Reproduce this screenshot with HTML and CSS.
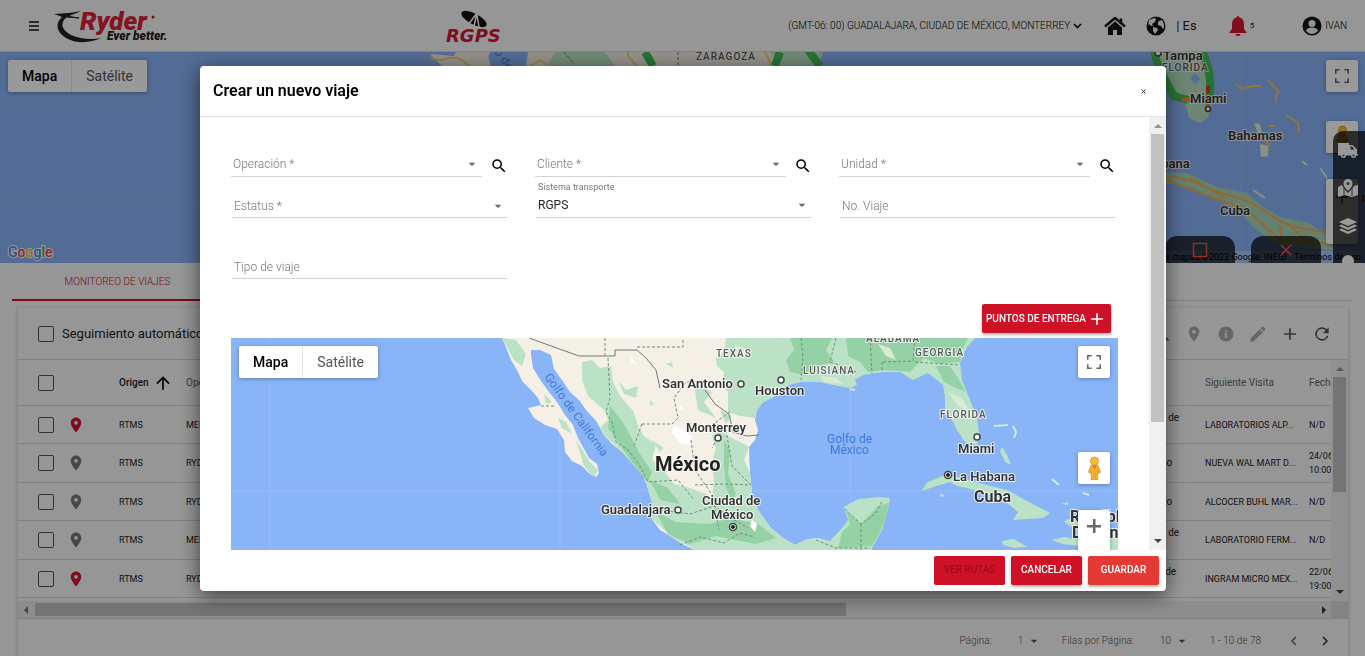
FILE: index.html
```html
<!DOCTYPE html>
<html lang="es">
<head>
<meta charset="utf-8">
<title>RGPS - Crear un nuevo viaje</title>
<link rel="stylesheet" href="styles.css">
</head>
<body>
<svg class="defs" aria-hidden="true">
  <symbol id="i-caret" viewBox="0 0 24 24"><path d="M7 10l5 5 5-5z"/></symbol>
  <symbol id="i-search" viewBox="0 0 24 24"><path d="M15.5 14h-.79l-.28-.27A6.471 6.471 0 0 0 16 9.500 6.500 6.500 0 1 0 9.500 16c1.610 0 3.090-.59 4.230-1.570l.27.28v.79l5 4.990L20.490 19l-4.990-5zm-6 0C7.010 14 5 11.990 5 9.500S7.010 5 9.500 5 14 7.010 14 9.500 11.990 14 9.500 14z"/></symbol>
  <symbol id="i-pin" viewBox="0 0 24 24"><path d="M12 2C8.130 2 5 5.130 5 9c0 5.250 7 13 7 13s7-7.750 7-13c0-3.870-3.130-7-7-7zm0 9.500a2.500 2.500 0 1 1 0-5 2.500 2.500 0 0 1 0 5z"/></symbol>
  <symbol id="i-plus" viewBox="0 0 24 24"><path d="M19 13h-6v6h-2v-6H5v-2h6V5h2v6h6v2z"/></symbol>
  <symbol id="i-full" viewBox="0 0 18 18"><path d="M0 0v6h2V2h4V0H0zm16 0h-4v2h4v4h2V0h-2zm0 16h-4v2h6v-6h-2v4zM2 12H0v6h6v-2H2v-4z"/></symbol>
  <symbol id="i-man" viewBox="0 0 14 26"><g stroke="#c9892b" stroke-width=".8"><path fill="#fbb52a" d="M3 10h8l2.400 7-1.800 1-1.100-2.500V25H7.500v-7h-1v7H3.500v-9.500L2.400 18 .6 17z"/><circle cx="7" cy="5" r="4.300" fill="#fbbc2f"/></g><path fill="#e8811c" d="M4 9.500h6L7 14z"/></symbol>
</svg>

<div class="app">
  <header class="topbar">
    <button class="icon-btn burger" aria-label="Menú"><svg width="10" height="10" viewBox="0 0 10 10"><path d="M0 1h10M0 5h10M0 9h10" stroke="#111" stroke-width="1.500"/></svg></button>
    <svg class="ryder" width="116" height="36" viewBox="0 0 116 36" role="img" aria-label="Ryder Ever better.">
      <path d="M0 6C10 5 18 5 27 3 21 6 16 7 13 9 5 15 8 22 17 27c9 4 20 5 30 3-10 5-25 6-35 0C2 24 1 15 8 9 6 8 3 7 0 6z" fill="#222"/>
      <path d="M5 7l20 3-12-1z" stroke="#222" fill="#222"/>
      <text x="26" y="22" class="ryder-name">Ryder</text><circle cx="99" cy="9" r="1.500" fill="#ce1126"/>
      <text x="53" y="32" class="ryder-tag">Ever better.</text>
    </svg>
    <svg class="rgps" width="62" height="36" viewBox="0 0 62 36" role="img" aria-label="RGPS">
      <ellipse cx="29" cy="13" rx="14" ry="5.500" transform="rotate(28 29 13)" fill="#111"/>
      <path d="M23 19L32 7l-3 13M32 9l2 12" stroke="#fff" stroke-width="1.500" fill="none"/>
      <text x="1" y="36" class="rgps-name">RGPS</text>
    </svg>
    <nav class="top-actions">
      <button class="text-btn tz">(GMT-06: 00) GUADALAJARA, CIUDAD DE MÉXICO, MONTERREY <svg width="9" height="6" viewBox="0 0 9 6"><path d="M1 1l3.500 3.500L8 1" fill="none" stroke="#111" stroke-width="1.700"/></svg></button>
      <button class="icon-btn home" aria-label="Inicio"><svg width="22" height="18" viewBox="0 0 22 18"><path d="M1 9.500L11 1l10 8.500M17 1.500v4" fill="none" stroke="#111" stroke-width="2.500"/><path d="M4 10.500L11 4.500l7 6V18h-5v-5H9v5H4z" fill="#111"/></svg></button>
      <button class="icon-btn globe" aria-label="Idioma"><svg width="20" height="20" viewBox="0 0 20 20"><circle cx="10" cy="10" r="9.500" fill="#111"/><path d="M3 4l5-2 2 1-1 3-3 2 1 2H5L3 8l-1 2zM7 11l4 1 1 2-3 4-2-3zM13 5l3-1 2 4v4l-1 1-2-3-3-1v-3z" fill="#f2f2f2"/></svg></button>
      <span class="lang">| Es</span>
      <button class="icon-btn bell" aria-label="Notificaciones"><svg width="18" height="20" viewBox="0 0 18 20"><path d="M9 0c1 0 1.300.8 1.300 1.600C13.500 2.300 15 5 15 8v4c0 1.500 1 2.500 2.500 4v1H.5v-1C2 14.500 3 13.500 3 12V8c0-3 1.500-5.700 4.700-6.400C7.700.8 8 0 9 0zM6.500 18h5a2.500 2 0 0 1-5 0z" fill="#d9142c"/></svg></button>
      <span class="count">5</span>
      <button class="text-btn user"><svg width="20" height="20" viewBox="0 0 20 20"><circle cx="10" cy="10" r="9.500" fill="#111"/><circle cx="10" cy="7.500" r="3.500" fill="#f5f5f5"/><path d="M3.800 14.500c1-2 3.500-3 6.200-3s5.200 1 6.200 3c-3 4.500-9.500 4.500-12.400 0z" fill="#f5f5f5"/></svg>IVAN</button>
    </nav>
  </header>

  <section class="map map-back" aria-label="Mapa de monitoreo">
    <svg class="map-art" viewBox="0 52 1365 211" preserveAspectRatio="xMaxYMin slice">
      <path fill="#8ab4f8" d="M0 52h1365v211H0z"/>
      <path d="M485 52v20M1241 52v211M0 202h1365" stroke="#98bcf6" fill="none"/>
      <path fill="#f5f0e5" d="M430 54l24 2 2-4h34c-4 6 2 10 0 16h-46z"/>
      <path fill="#f5f0e5" d="M528 52h295l-5 14H526z"/>
      <path fill="#bbe2c6" d="M555 52h50l10 14h-68zM770 52h53l-5 14h-38z"/>
      <path d="M430 57c12 8 18-3 30 2l10 7M530 66l10-6 8 6M628 52c-2 6 6 8 8 14M765 52l7 14" stroke="#f7cf73" stroke-width="2" fill="none"/>
      <path d="M645 52l8 14M780 52l-5 14M808 50l12 16" stroke="#3fbf55" stroke-width="8" fill="none"/>
      <path d="M564 52l10 12M678 52v14" stroke="#777" stroke-dasharray="3 2" fill="none"/>
      <text x="696" y="60" class="m-state">ZARAGOZA</text>
      <text x="494" y="52" class="m-sea" transform="rotate(55 494 52)">o de</text>
      <path fill="#b5dfc0" d="M1152 52h56l5 28-1 24-4 14-8 5-11-5-4-15-12-3-10-30z"/>
      <path d="M1154 52c4 16 14 34 20 44l14 4M1203 52c6 16 9 30 6 50" stroke="#3fbf55" stroke-width="8" fill="none"/>
      <path d="M1182 100l10 0M1205 96l4 12" stroke="#f08a3c" stroke-width="4"/><path d="M1208 86v7" stroke="#e0332b" stroke-width="4"/>
      <path fill="#8ab4f8" d="M1195 73l5 6-5 5-5-6z"/>
      <path d="M1236 84l6 5 10-3h9M1268 80l10 11-3 11M1286 115l12 8 1 10M1269 126h6M1255 124l6 12 8 8-3 12" stroke="#efc468" stroke-width="2" fill="none"/>
      <path fill="#e9eedc" d="M1254 123l6 1 2 11-3 1zM1260 144l8 2v10l-7 1z"/>
      <path d="M1253 190l12 8M1302 161l5 4M1320 168l7 10" stroke="#e3eee4" stroke-width="2"/>
      <path fill="#a9d8b8" d="M1160 173L1187 173L1217 187L1247 193L1263 207L1280 217L1310 223L1325 235L1334 250L1303 248L1277 245L1253 227L1240 212L1217 200L1190 187L1160 182z"/>
      <path d="M1160 175C1190 176 1210 192 1232 196C1260 202 1270 220 1292 226L1334 234M1160 178C1190 188 1205 196 1225 202C1250 206 1262 226 1280 240L1334 244M1190 178L1225 198M1280 226l2 18M1290 226l22 20" stroke="#efae55" stroke-width="2" fill="none"/>
      <text x="1163" y="60" class="m-city">Tampa</text><circle cx="1158" cy="53" r="3" fill="#fff" stroke="#444" stroke-width="1.500"/>
      <text x="1162" y="71" class="m-state">FLORIDA</text>
      <text x="1190" y="103" class="m-city">Miami</text><circle cx="1208" cy="109" r="2.500" fill="#fff" stroke="#444" stroke-width="1.500"/>
      <text x="1228" y="140" class="m-city">Bahamas</text>
      <text x="1145" y="168" class="m-city">Habana</text>
      <text x="1220" y="215" class="m-city">Cuba</text>
      <text x="1361" y="203" class="m-city">It</text>
      <text x="8" y="257" class="google"><tspan fill="#4285f4">G</tspan><tspan fill="#ea4335">o</tspan><tspan fill="#fbbc05">o</tspan><tspan fill="#4285f4">g</tspan><tspan fill="#34a853">l</tspan><tspan fill="#ea4335">e</tspan></text>
    </svg>
    <div class="map-type"><button class="on">Mapa</button><button>Satélite</button></div>
    <button class="map-ctl ctl-full" aria-label="Pantalla completa"><svg width="14" height="14"><use href="#i-full"/></svg></button>
    <button class="map-ctl ctl-man" aria-label="Street View"><svg width="13" height="25"><use href="#i-man"/></svg></button>
    <button class="map-ctl ctl-zoom" aria-label="Acercar"><svg width="22" height="22"><use href="#i-plus"/></svg></button>
    <p class="credits"><span>Datos de mapas ©2023 Google, INEGI</span><a href="#">Términos de uso</a></p>
    <div class="map-tabs">
      <button aria-label="Recuadro"><svg width="16" height="16" viewBox="0 0 16 16"><path d="M1.500 1.500h13v13h-13z" fill="none" stroke="#ff4a42" stroke-width="1.500"/></svg></button>
      <button aria-label="Cerrar mapa"><svg width="12" height="12" viewBox="0 0 12 12"><path d="M1 1l10 10M11 1L1 11" stroke="#ff4a42" stroke-width="1.500"/></svg></button>
    </div>
    <div class="side-tools">
      <button aria-label="Unidades"><svg width="20" height="16" viewBox="0 0 20 16"><path fill="#fff" d="M0 1h11v2h3.500L19 7.500V12h1v1.500h-2a2.500 2.500 0 0 1-5 0H8a2.500 2.500 0 0 1-5 0H0z"/><circle cx="5.500" cy="13.500" r="1" fill="#444"/><circle cx="15.500" cy="13.500" r="1" fill="#444"/><path d="M12.500 4.500h1.500l2.500 3h-4z" fill="#444"/></svg></button>
      <button aria-label="Geocercas"><svg width="20" height="18" viewBox="0 0 20 18"><path fill="#fff" d="M0 8l4-2c1 3 4 6 6 8 2-2 5-5 6-7l4-1v10l-6 2-7-2-7 2z"/><path fill="#fff" fill-rule="evenodd" d="M10 0a4.500 4.500 0 0 1 4.500 4.500C14.500 8 10 12 10 12S5.500 8 5.500 4.500A4.500 4.500 0 0 1 10 0zm0 3a1.500 1.500 0 1 0 0 3 1.500 1.500 0 0 0 0-3z"/><path d="M6 9v8M14 9v8" stroke="#555"/></svg></button>
      <button aria-label="Capas"><svg width="18" height="18" viewBox="0 0 18 18"><path fill="#fff" d="M9 1l9 4-9 4-9-4zM2.500 7.500L9 10.500l6.500-3L18 9l-9 4-9-4zM2.500 11.500L9 14.500l6.500-3L18 13l-9 4-9-4z"/></svg></button>
      <button aria-label="Más"><svg width="14" height="20"><circle cx="7" cy="7" r="6" fill="#fff"/></svg></button>
    </div>
  </section>

  <div class="tabs"><button class="tab">MONITOREO DE VIAJES</button></div>

  <main class="card">
    <div class="card-bar">
      <label class="follow"><input type="checkbox" class="check">Seguimiento automático</label>
      <div class="card-tools">
        <button class="icon-btn" aria-label="Buscar"><svg width="20" height="20"><use href="#i-search"/></svg></button>
        <button class="icon-btn dis" aria-label="Ubicar"><svg width="18" height="18"><use href="#i-pin"/></svg></button>
        <button class="icon-btn dis" aria-label="Información"><svg width="18" height="18" viewBox="0 0 24 24"><path d="M12 2a10 10 0 1 0 0 20 10 10 0 0 0 0-20zm2 15h-4v-1.500h1V12h-1v-1.500h3v5h1zm-1-8h-2V7h2z"/></svg></button>
        <button class="icon-btn dis" aria-label="Editar"><svg width="20" height="20" viewBox="0 0 24 24"><path d="M3 17.250V21h3.750L17.810 9.940l-3.750-3.750L3 17.250zM20.710 7.040a1 1 0 0 0 0-1.410l-2.340-2.340a1 1 0 0 0-1.410 0l-1.830 1.830 3.750 3.750 1.830-1.830z"/></svg></button>
        <button class="icon-btn" aria-label="Agregar"><svg width="20" height="20"><use href="#i-plus"/></svg></button>
        <button class="icon-btn" aria-label="Actualizar"><svg width="20" height="20" viewBox="0 0 24 24"><path d="M17.650 6.350A8 8 0 1 0 19.730 14h-2.080A6 6 0 1 1 12 6c1.660 0 3.140.69 4.220 1.780L13 11h7V4l-2.350 2.350z"/></svg></button>
      </div>
    </div>
    <div class="grid-wrap">
      <table class="trips">
        <colgroup><col class="c-check"><col class="c-pin"><col class="c-org"><col><col class="c-state"><col class="c-next"><col class="c-date"></colgroup>
        <thead><tr><th><input type="checkbox" class="check" aria-label="Seleccionar todo"></th><th></th><th class="sorted">Origen <svg width="20" height="20" viewBox="0 0 24 24"><path d="M4 12l1.410 1.410L11 7.830V20h2V7.830l5.580 5.590L20 12l-8-8-8 8z"/></svg></th><th>Operación</th><th>Estado</th><th>Siguiente Visita</th><th>Fecha</th></tr></thead>
        <tbody>
          <tr><td><input type="checkbox" class="check" aria-label="Viaje 1"></td><td><svg class="pin red" width="18" height="18"><use href="#i-pin"/></svg></td><td>RTMS</td><td>MERCK</td><td class="state">Salida fuera de ruta</td><td>LABORATORIOS ALP...</td><td>N/D</td></tr>
          <tr><td><input type="checkbox" class="check" aria-label="Viaje 2"></td><td><svg class="pin" width="18" height="18"><use href="#i-pin"/></svg></td><td>RTMS</td><td>RYDER</td><td class="state">Viaje iniciado</td><td>NUEVA WAL MART D...</td><td>24/06/2023 10:00</td></tr>
          <tr><td><input type="checkbox" class="check" aria-label="Viaje 3"></td><td><svg class="pin" width="18" height="18"><use href="#i-pin"/></svg></td><td>RTMS</td><td>RYDER</td><td class="state">Viaje iniciado</td><td>ALCOCER BUHL MAR...</td><td>N/D</td></tr>
          <tr><td><input type="checkbox" class="check" aria-label="Viaje 4"></td><td><svg class="pin" width="18" height="18"><use href="#i-pin"/></svg></td><td>RTMS</td><td>MERCK</td><td class="state">Salida fuera de ruta</td><td>LABORATORIO FERM...</td><td>N/D</td></tr>
          <tr><td><input type="checkbox" class="check" aria-label="Viaje 5"></td><td><svg class="pin red" width="18" height="18"><use href="#i-pin"/></svg></td><td>RTMS</td><td>RYDER</td><td class="state">En proceso de entrega</td><td>INGRAM MICRO MEX...</td><td>22/06/2023 19:00</td></tr>
        </tbody>
      </table>
      <div class="vscroll" aria-hidden="true"><i class="up"></i><b class="grid-thumb"></b><i class="down"></i></div>
    </div>
    <div class="hscroll" aria-hidden="true"><i class="left"></i><b></b><i class="right"></i><span></span></div>
    <footer class="pager">
      <label for="page">Página:</label>
      <span class="mini"><select id="page"><option>1</option></select><svg width="16" height="16"><use href="#i-caret"/></svg></span>
      <label for="rows">Filas por Página:</label>
      <span class="mini"><select id="rows"><option>10</option></select><svg width="16" height="16"><use href="#i-caret"/></svg></span>
      <span class="range">1 - 10 de 78</span>
      <button class="icon-btn" aria-label="Anterior"><svg width="7" height="10" viewBox="0 0 7 10"><path d="M6 1L2 5l4 4" fill="none" stroke="#666" stroke-width="1.500"/></svg></button>
      <button class="icon-btn" aria-label="Siguiente"><svg width="7" height="10" viewBox="0 0 7 10"><path d="M1 1l4 4-4 4" fill="none" stroke="#333" stroke-width="1.500"/></svg></button>
    </footer>
  </main>
</div>

<div class="backdrop">
  <section class="dialog" role="dialog" aria-labelledby="dlg-title">
    <header class="dlg-head"><h1 id="dlg-title">Crear un nuevo viaje</h1><button class="icon-btn" aria-label="Cerrar"><svg width="5" height="5" viewBox="0 0 5 5"><path d="M.5.5l4 4M4.500.5l-4 4" stroke="#333"/></svg></button></header>
    <div class="dlg-body">
      <div class="dlg-content">
        <form class="form">
          <div class="pair"><div class="field"><label for="op">Operación *</label><select id="op"><option></option></select><svg class="caret"><use href="#i-caret"/></svg></div><button type="button" class="icon-btn" aria-label="Buscar operación"><svg width="20" height="20"><use href="#i-search"/></svg></button></div>
          <div class="pair"><div class="field"><label for="cl">Cliente *</label><select id="cl"><option></option></select><svg class="caret"><use href="#i-caret"/></svg></div><button type="button" class="icon-btn" aria-label="Buscar cliente"><svg width="20" height="20"><use href="#i-search"/></svg></button></div>
          <div class="pair"><div class="field"><label for="un">Unidad *</label><select id="un"><option></option></select><svg class="caret"><use href="#i-caret"/></svg></div><button type="button" class="icon-btn" aria-label="Buscar unidad"><svg width="20" height="20"><use href="#i-search"/></svg></button></div>
          <div class="field inset"><label for="es">Estatus *</label><select id="es"><option></option></select><svg class="caret"><use href="#i-caret"/></svg></div>
          <div class="field inset filled"><label for="si">Sistema transporte</label><select id="si"><option>RGPS</option></select><svg class="caret"><use href="#i-caret"/></svg></div>
          <div class="field inset"><label for="nv">No. Viaje</label><input id="nv" type="text"></div>
          <div class="field inset"><label for="tv">Tipo de viaje</label><input id="tv" type="text"></div>
        </form>
        <div class="points"><button class="btn">PUNTOS DE ENTREGA <svg width="20" height="20"><use href="#i-plus"/></svg></button></div>
        <div class="map map-front">
          <svg class="map-art" viewBox="231 338 887 300" preserveAspectRatio="xMidYMin slice">
            <path fill="#8ab4f8" d="M231 338h887v300H231z"/>
            <path d="M270 338v300M560 338v300M850 338v300M231 491h887" stroke="#98bdf9" fill="none"/>
            <path fill="#f5f0e5" d="M502 338L505 345L511 360L518 372L522 381L530 389L538 398L541 405L528 408L534 418L545 425L557 429L564 440L565 452L572 461L582 466L590 474L596 477L599 473L597 464L589 458L584 449L578 438L573 425L565 415L557 402L549 392L541 381L533 368L531 355L531 350L540 350L551 355L554 369L562 380L570 392L580 401L586 410L597 422L603 434L612 444L622 452L632 463L644 477L648 489L652 502L651 518L660 530L672 537L684 545L700 552L700 600L820 600L820 538L808 539L795 545L783 538L770 527L758 510L752 493L750 473L749 447L755 440L758 430L755 420L757 410L763 402L777 395L787 385L800 382L790 338z"/>
            <path fill="#bbe2c6" d="M726 338L975 338L967 347L960 363L962 380L970 400L977 418L979 433L977 445L965 442L957 430L952 420L945 408L945 397L943 385L928 373L913 380L900 372L883 372L863 375L855 380L857 385L850 388L833 385L820 382L800 382L787 385L777 395L763 402L757 410L755 418L740 416L728 412L728 392L722 384L724 372L717 366L716 358L724 352z"/>
            <path fill="#bbe2c6" d="M582 362L592 360L600 368L611 366L613 382L620 396L634 412L638 426L644 436L656 444L652 460L662 468L674 484L690 488L706 494L712 500L714 480L712 462L716 448L712 436L720 428L728 436L740 442L749 447L744 460L750 473L752 493L758 510L770 527L783 538L795 545L808 539L820 538L820 600L700 600L700 552L672 537L651 518L652 502L644 477L622 452L603 434L600 428L608 420L604 410L588 396L582 380z"/>
            <path fill="#bbe2c6" d="M502 338L516 340L526 354L522 366L514 360L506 346zM544 394L552 402L546 404zM558 418L566 422L572 434L562 428zM576 440L590 462L598 470L594 477L584 466zM694 384L712 392L704 402L716 418L698 410zM720 410L732 416L726 424z"/>
            <path fill="#94d2a5" d="M790 338L832 338L826 350L834 362L818 366L806 376L790 372L786 360L794 350zM846 338L968 338L962 350L960 362L940 364L924 358L910 372L886 370L868 372L860 362L848 356zM936 366L950 366L958 378L966 392L956 388L944 382zM724 440L730 450L728 474L736 494L732 500L726 488L724 462zM610 406L624 424L640 454L652 472L648 482L632 462L622 448L608 428zM656 512L676 522L710 524L730 518L758 524L776 538L756 544L716 536L690 544L668 534zM650 480L668 488L680 504L660 500z"/>
            <path fill="#bbe2c6" d="M796 552L805 544L818 538L830 541L843 527L848 520L844 507L858 499L880 497L890 498L888 510L882 530L872 548L870 560z"/>
            <path fill="#94d2a5" d="M846 510L861 524L878 506L889 503L886 518L880 532L872 546L838 548L842 532L850 524zM922 490L927 482L943 475L938 482L928 486zM1014 518L1024 511L1048 514L1042 518z"/>
            <path fill="#bbe2c6" d="M927 483L943 476L957 477L972 481L987 485L1007 490L1027 501L1050 513L1043 518L1013 520L1018 512L1007 503L987 494L967 488L957 486L950 482L933 487L922 491zM1002 541L1014 539L1027 547L1014 548L1003 545zM1052 540L1064 537L1080 540L1074 528L1064 522L1068 519L1084 522L1092 530L1118 530L1118 560L1080 546L1062 544zM1061 504L1068 502L1068 505zM940 493L945 496L941 497zM1002 447L1008 457L1011 465L1005 462L1000 451z"/>
            <path d="M994 426l14-1M1013 426l3 6-2 6M1052 479l7 6M1083 493l6 2M850 389l5 1" stroke="#cfe9d8" stroke-width="2" fill="none"/>
            <path fill="#fff" d="M631 357l6 8-6-3zM674 425l8 4 10 8-2 8-10-2-8-10zM680 405l4 6-5-2zM752 520l5 4-2 8-5-6z"/>
            <path fill="#bbe2c6" d="M618 380l8 10 12-4-2 12-12-4zM650 400l4 4-4 2zM652 440l12 8-4 4zM666 364l6-2 1 6z"/>
            <path fill="#d9ead3" d="M735 345l12 4-4 10-10-4zM878 344l12 4 6 12-10-4zM820 376l16 2 8 6-20-2zM948 392l14 6 8 14-12-6z"/>
            <path d="M529 338l50 18h36v-6h22l9 8 10 12 4 18M705 390l10 14 14 10 4 18 14 4 12-1" stroke="#777" fill="none"/>
            <path d="M605 338v18M637 347h46v-9M608 358l2 40-4 14 6 10 4 20 12 8 12 16 8 16 30-2 16 20M642 424h30l6-6-4-20 12-16 20 0M642 424l-8 22M730 412l-14 10 4 12-8 14M691 440l4 30 18 26 6 34M726 430l6 36 20 20M695 485l30-1 26 1M660 510l30 4 24-8 20 14 14 8M680 545l20-8 24 6 16-10 14 4M541 406l14 0M801 338l2 20-2 22M836 338l-6 24 12 4 14 6M870 338l2 36M883 362l30-1 2-23M882 370v-8M915 362l44 3M845 509l16 15 14-10 8-14M861 524v30M816 540l20 8 34 0" stroke="#6f8f7c" stroke-dasharray="3 2" fill="none"/>
            <text x="716" y="357" class="m-state">TEXAS</text>
            <text x="803" y="374" class="m-state">LUISIANA</text>
            <text x="866" y="342" class="m-state">ALABAMA</text>
            <text x="915" y="356" class="m-state">GEORGIA</text>
            <text x="940" y="418" class="m-state">FLORIDA</text>
            <text x="662" y="388" class="m-city">San Antonio</text>
            <text x="755" y="395" class="m-city">Houston</text>
            <text x="686" y="432" class="m-city">Monterrey</text>
            <text x="655" y="471" class="m-country">México</text>
            <text x="601" y="514" class="m-city">Guadalajara</text>
            <text x="702" y="505" class="m-city">Ciudad de</text>
            <text x="711" y="519" class="m-city">México</text>
            <text x="958" y="453" class="m-city">Miami</text>
            <text x="953" y="481" class="m-city">La Habana</text>
            <text x="974" y="502" class="m-mid">Cuba</text>
            <text x="1070" y="522" class="m-mid">República</text>
            <text x="1072" y="538" class="m-mid">Dominicana</text>
            <text x="827" y="443" class="m-sea">Golfo de</text>
            <text x="830" y="454" class="m-sea">México</text>
            <text x="544" y="377" class="m-sea" transform="rotate(54 544 377)">Golfo de California</text>
            <g fill="#fff" stroke="#444" stroke-width="1.500"><circle cx="741" cy="384" r="3"/><circle cx="781" cy="380" r="3"/><circle cx="718" cy="438" r="3"/><circle cx="678" cy="510" r="3"/><circle cx="977" cy="437" r="3"/><circle cx="733" cy="527" r="3.500"/><circle cx="948" cy="475" r="3.500"/></g>
            <circle cx="733" cy="527" r="2" fill="#222"/><circle cx="948" cy="475" r="2" fill="#222"/>
          </svg>
          <div class="map-type"><button class="on">Mapa</button><button>Satélite</button></div>
          <button class="map-ctl ctl-full" aria-label="Pantalla completa"><svg width="14" height="14"><use href="#i-full"/></svg></button>
          <button class="map-ctl ctl-man" aria-label="Street View"><svg width="13" height="25"><use href="#i-man"/></svg></button>
          <button class="map-ctl ctl-zoom" aria-label="Acercar"><svg width="14" height="14" viewBox="0 0 14 14"><path d="M6 0h2.500v6H14v2.500H8.500V14H6V8.500H0V6h6z"/></svg></button>
        </div>
      </div>
      <div class="vscroll" aria-hidden="true"><i class="up"></i><b class="dlg-thumb"></b><i class="down"></i></div>
    </div>
    <footer class="dlg-foot"><button class="btn" disabled>VER RUTAS</button><button class="btn">CANCELAR</button><button class="btn save">GUARDAR</button></footer>
  </section>
</div>
</body>
</html>
```
FILE: styles.css
```css
* { box-sizing: border-box; }
html, body { margin: 0; height: 100%; }
body { font: 10px/14px Roboto, "Liberation Sans", sans-serif; color: #222; background: #fafafa; overflow: hidden; }
button, input, select { font: inherit; color: inherit; margin: 0; }
button { cursor: pointer; border: 0; background: none; padding: 0; }
.defs { display: none; }
.icon-btn, .text-btn { display: inline-flex; align-items: center; justify-content: center; flex: none; }

.app { height: 100vh; display: flex; flex-direction: column; }
.topbar { height: 52px; flex: none; display: flex; align-items: center; padding: 0 18px 0 29px; background: #fafafa; border-bottom: 1px solid #ddd; }
.ryder { margin-left: 15px; overflow: visible; }
.ryder-name { font: italic 900 26px Roboto, sans-serif; fill: #dc2436; }
.ryder-tag { font: italic 900 12px Roboto, sans-serif; fill: #222; }
.rgps { margin-left: 275px; margin-bottom: 4px; overflow: visible; }
.rgps-name { font: italic bold 18px "DejaVu Sans", sans-serif; fill: #d31735; }
.top-actions { margin-left: auto; display: flex; align-items: center; }
.tz { gap: 3px; font-weight: 300; color: #000; }
.home { margin-left: 22px; }
.globe { margin-left: 20px; }
.lang { font-size: 13px; margin-left: 10px; }
.bell { margin-left: 32px; }
.count { font-size: 8px; margin-left: 3px; }
.user { margin-left: 48px; gap: 3px; font-weight: 300; color: #000; }

.map { position: relative; overflow: hidden; }
.map-art { display: block; width: 100%; height: 100%; }
.map-back { height: 211px; flex: none; }
.map-front { height: 300px; flex: none; }
.m-state, .m-city, .m-mid, .m-country, .m-sea { font-family: Roboto, sans-serif; paint-order: stroke; stroke: #fff; stroke-opacity: .8; stroke-width: 2px; stroke-linejoin: round; fill: #333; }
.m-state { font-size: 10px; font-weight: 500; letter-spacing: 1px; fill: #555; }
.m-city { font-size: 13px; font-weight: 600; }
.m-mid { font-size: 16px; font-weight: 700; }
.m-country { font-size: 20px; font-weight: 700; fill: #222; }
.m-sea { font-size: 12px; fill: #3d78d8; stroke: none; }
.google { font: 500 14px Roboto, sans-serif; paint-order: stroke; stroke: #fff; stroke-width: 2px; }
.map-type { position: absolute; left: 8px; top: 8px; display: flex; height: 32px; background: #fff; border-radius: 2px; box-shadow: 0 1px 4px rgba(0,0,0,.3); font-size: 14px; color: #565656; }
.map-type button { padding: 0 14px; }
.map-type .on { font-weight: 500; color: #000; border-right: 1px solid #e6e6e6; }
.map-ctl { position: absolute; right: 8px; width: 32px; height: 32px; display: flex; align-items: center; justify-content: center; background: #fff; border-radius: 2px; box-shadow: 0 1px 4px rgba(0,0,0,.3); fill: #666; }
.ctl-full { top: 8px; right: 7px; }
.map-back .ctl-man { top: 69px; right: 7px; }
.map-back .ctl-zoom { top: 127px; right: 7px; height: 65px; padding-bottom: 30px; }
.map-front .ctl-full { right: 8px; }
.map-front .ctl-man { top: 114px; }
.map-front .ctl-zoom { top: 172px; height: 65px; padding-bottom: 33px; }
.credits { position: absolute; right: 4px; bottom: 0; margin: 0; display: flex; gap: 8px; padding-left: 4px; background: rgba(245,245,245,.3); font-size: 9px; line-height: 12px; color: #000; }
.credits a { color: #000; text-decoration: none; }
.map-tabs { position: absolute; right: 44px; bottom: 0; display: flex; gap: 16px; }
.map-tabs button { width: 70px; height: 27px; border-radius: 12px 12px 0 0; background: rgba(0,0,0,.7); display: flex; align-items: center; justify-content: center; }
.side-tools { position: absolute; right: 0; top: 79px; bottom: 0; width: 32px; background: rgba(0,0,0,.7); border-radius: 10px 0 0 0; overflow: hidden; }
.side-tools button { width: 30px; height: 38px; display: flex; align-items: center; justify-content: center; }

.tabs { flex: none; height: 38px; margin: 0 12px; border-bottom: 1px solid #d5d5d5; display: flex; }
.tab { width: 211px; margin-bottom: -1px; padding-top: 2px; border-bottom: 2px solid #ce1126; color: #ce1126; font-weight: 300; }
.card { flex: 1 0 auto; margin: 7px 17px 0 18px; background: #fafafa; box-shadow: 0 1px 4px rgba(0,0,0,.25); display: flex; flex-direction: column; }
.card-bar { height: 52px; flex: none; display: flex; align-items: center; justify-content: space-between; border-bottom: 1px solid #d8d8d8; padding: 0 16px 0 20px; }
.follow { display: flex; align-items: center; gap: 8px; font-size: 13px; }
.check { appearance: none; display: block; width: 16px; height: 16px; border: 1px solid #555; border-radius: 2px; }
.card-tools { display: flex; gap: 12px; fill: #555; }
.card-tools .icon-btn { width: 20px; height: 20px; }
.card-tools .dis { fill: #aaa; }
.grid-wrap { display: flex; height: 241px; flex: none; overflow: hidden; }
.trips { flex: 1; min-width: 0; width: 0; align-self: flex-start; table-layout: fixed; border-collapse: separate; border-spacing: 0; }
.trips th, .trips td { padding: 0; height: 38px; text-align: left; font-weight: 400; border-bottom: 1px solid #d8d8d8; overflow: hidden; vertical-align: middle; }
.trips td { font-size: 9px; }
.trips tbody tr:nth-child(even) td { height: 39px; }
.trips th { height: 46px; color: #666; white-space: nowrap; }
.trips th:first-child, .trips td:first-child { padding-left: 20px; }
.trips td:nth-child(6) { white-space: nowrap; }
.trips .state { font-size: 10px; padding-right: 10px; }
.trips .sorted { color: #222; font-weight: 500; }
.sorted svg { vertical-align: middle; margin-left: 2px; }
.c-check { width: 49px; } .c-pin { width: 52px; } .c-org { width: 67px; } .c-state { width: 92px; } .c-next { width: 104px; } .c-date { width: 22px; }
.pin { display: block; fill: #777; } .pin.red { fill: #d5152d; }
.vscroll { flex: none; width: 17px; background: #f0f0f0; display: flex; flex-direction: column; align-items: center; padding: 7px 0; }
.vscroll i { border: 4px solid transparent; height: 0; width: 0; }
.vscroll .up { border-top-width: 0; border-bottom-color: #909090; }
.vscroll .down { border-bottom-width: 0; border-top-color: #444; margin-top: auto; }
.vscroll b { width: 13px; background: #c1c1c1; margin-top: 6px; }
.grid-thumb { height: 115px; }
.dlg-thumb { height: 288px; }
.hscroll { flex: none; height: 17px; background: #ececec; display: flex; align-items: center; }
.hscroll i { border: 4px solid transparent; margin: 0 5px; }
.hscroll .left { border-left-width: 0; border-right-color: #777; margin: 0 7px 0 6px; }
.hscroll .right { border-right-width: 0; border-left-color: #333; margin-left: auto; }
.hscroll b { width: 61%; height: 13px; background: #c1c1c1; }
.hscroll span { width: 17px; height: 17px; background: #dcdcdc; }
.pager { display: flex; align-items: center; justify-content: flex-end; padding: 0 19px 0 0; height: 44px; border-top: 1px solid #d8d8d8; color: #555; font-weight: 300; }
.mini { display: flex; align-items: center; gap: 2px; margin: 0 20px 0 26px; fill: #555; }
.mini select { appearance: none; border: 0; background: none; padding: 0; width: auto; }
.pager .range { margin-right: 29px; }
.pager .icon-btn + .icon-btn { margin-left: 25px; }

.backdrop { position: fixed; inset: 0; background: rgba(0,0,0,.4); display: flex; align-items: center; padding: 1px 199px 0 200px; }
.dialog { flex: 1; min-width: 0; height: 80vh; background: #fff; border-radius: 4px; box-shadow: 0 5px 20px rgba(0,0,0,.6); display: flex; flex-direction: column; overflow: hidden; }
.dlg-head { height: 51px; flex: none; display: flex; align-items: center; justify-content: space-between; padding: 0 20px 0 13px; border-bottom: 1px solid #e0e3e6; }
.dlg-head h1 { margin: 0; font-size: 16px; line-height: 20px; font-weight: 600; color: #000; }
.dlg-body { flex: 1; min-height: 0; display: flex; overflow: hidden; }
.dlg-content { flex: 1; min-width: 0; padding: 32px 31px 0; overflow: hidden; }
.form { display: grid; grid-template-columns: repeat(3, 1fr); column-gap: 27px; grid-template-rows: 28px 41px 61px; align-items: end; padding-right: 2px; font-size: 12px; }
.pair { display: flex; align-items: center; }
.pair .icon-btn { width: 26px; height: 28px; padding: 5px 0 0 8px; }
.pair .field { flex: 1; }
.field { display: grid; grid-template-columns: 1fr 16px; height: 28px; padding: 2px 2px 0 0; border-bottom: 1px solid #d4d4d4; align-items: center; font-weight: 300; }
.field label { grid-area: 1 / 1; padding-left: 2px; color: #777; pointer-events: none; }
.field select, .field input { grid-area: 1 / 1 / 2 / 3; width: 100%; height: 25px; appearance: none; border: 0; background: none; outline: 0; padding: 0 2px; }
.caret { grid-area: 1 / 2; width: 16px; height: 16px; fill: #666; pointer-events: none; }
.inset { padding-top: 4px; margin-left: 1px; }
.inset select, .inset input { height: 23px; }
.filled { height: 41px; grid-template-rows: 12px 24px; }
.filled label { font-size: 9px; line-height: 12px; font-weight: 400; }
.filled select { grid-area: 2 / 1 / 3 / 3; height: 24px; font-weight: 400; }
.filled .caret { grid-area: 2 / 2; }
.points { display: flex; justify-content: flex-end; padding: 25px 7px 5px 0; }
.btn { height: 29px; min-width: 71px; padding: 0 5px; display: inline-flex; align-items: center; justify-content: center; gap: 1px; background: #ce1126; color: #fff; fill: #fff; font-weight: 500; border-radius: 2px; box-shadow: 0 2px 3px rgba(0,0,0,.3); }
.points .btn { padding: 0 4px; }
.btn:disabled { color: #8c0d1b; box-shadow: none; font-weight: 400; }
.btn.save { background: #e53935; }
.dlg-foot { flex: none; height: 41px; display: flex; align-items: center; justify-content: flex-end; gap: 6px; padding-right: 7px; }
```
